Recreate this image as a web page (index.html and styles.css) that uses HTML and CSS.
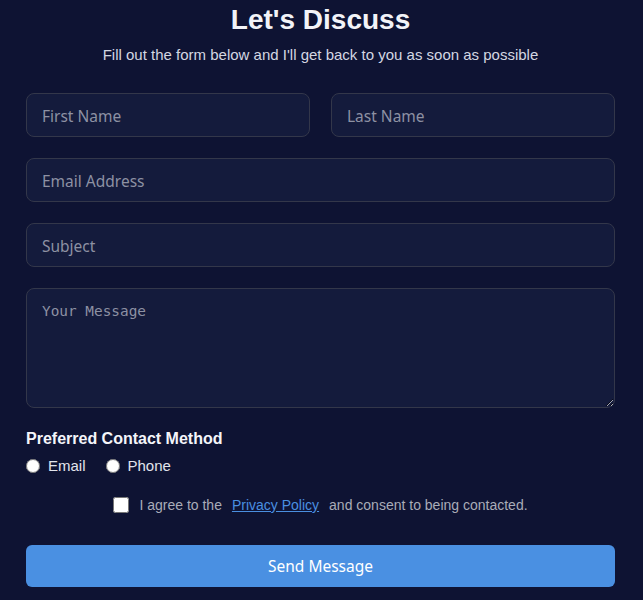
FILE: index.html
```html
<!DOCTYPE html>
<html lang="en">
<head>
<meta charset="utf-8">
<title>Let's Discuss</title>
<link rel="stylesheet" href="styles.css">
</head>
<body>
<main class="wrap">
  <h1 class="title">Let's Discuss</h1>
  <p class="subtitle">Fill out the form below and I'll get back to you as soon as possible</p>
  <form class="form">
    <div class="row">
      <input class="field" type="text" placeholder="First Name">
      <input class="field" type="text" placeholder="Last Name">
    </div>
    <input class="field" type="email" placeholder="Email Address">
    <input class="field" type="text" placeholder="Subject">
    <textarea class="field area" placeholder="Your Message"></textarea>
    <div class="contact">
      <div class="contact-label">Preferred Contact Method</div>
      <div class="radios">
        <label class="radio"><input type="radio" name="m"> Email</label>
        <label class="radio"><input type="radio" name="m"> Phone</label>
      </div>
    </div>
    <label class="agree"><input type="checkbox" class="check"><span>I agree to the</span><a href="#" class="link">Privacy Policy</a><span>and consent to being contacted.</span></label>
    <button type="button" class="send">Send Message</button>
  </form>
</main>
</body>
</html>
```
FILE: styles.css
```css
html, body { margin: 0; padding: 0; }
body {
  background: #0e1333;
  font-family: "Liberation Sans", Arial, sans-serif;
  color: #e8eaf2;
}
.wrap {
  width: 589px;
  margin: 0 0 0 26px;
  padding-top: 3px;
}
.title {
  margin: 0;
  text-align: center;
  font-size: 28px;
  line-height: 34px;
  font-weight: 700;
  color: #f2f3f8;
}
.subtitle {
  margin: 7px 0 0;
  text-align: center;
  font-size: 15px;
  line-height: 21px;
  color: #d4d7e2;
}
.form {
  display: flex;
  flex-direction: column;
  gap: 21px;
  margin-top: 28px;
}
.row {
  display: grid;
  grid-template-columns: 1fr 1fr;
  gap: 21px;
}
.field {
  box-sizing: border-box;
  height: 44px;
  width: 100%;
  background: #141b3c;
  border: 1px solid #33374a;
  border-radius: 8px;
  padding: 1px 15px 0;
  font-family: "Noto Sans", Tahoma, sans-serif;
  font-size: 15.5px;
  color: #e8eaf2;
  outline: none;
}
.field::placeholder { color: #8d91a3; }
.area {
  height: 120px;
  padding: 14px 15px;
  font-family: "DejaVu Sans Mono", Consolas, monospace;
  font-size: 14.4px;
  resize: vertical;
  display: block;
}
.contact-label {
  font-weight: 700;
  font-size: 16px;
  line-height: 20px;
  color: #f4f5fa;
}
.radios {
  display: flex;
  gap: 20px;
  margin-top: 8px;
}
.radio {
  display: flex;
  align-items: center;
  gap: 8px;
  font-size: 15px;
  color: #e2e4ec;
}
.radio input {
  margin: 0;
  width: 14px;
  height: 14px;
}
.agree {
  display: flex;
  align-items: center;
  justify-content: center;
  gap: 10px;
  font-size: 14px;
  color: #a9acb8;
  margin-top: 2px;
}
.check {
  margin: 0;
  width: 16px;
  height: 16px;
}
.link {
  color: #4a8fe0;
  text-decoration: underline;
}
.send {
  margin-top: 11px;
  height: 42px;
  width: 100%;
  border: none;
  border-radius: 6px;
  background: #4a90e2;
  color: #ffffff;
  font-family: "Noto Sans", Tahoma, sans-serif;
  font-size: 15.5px;
}
```
